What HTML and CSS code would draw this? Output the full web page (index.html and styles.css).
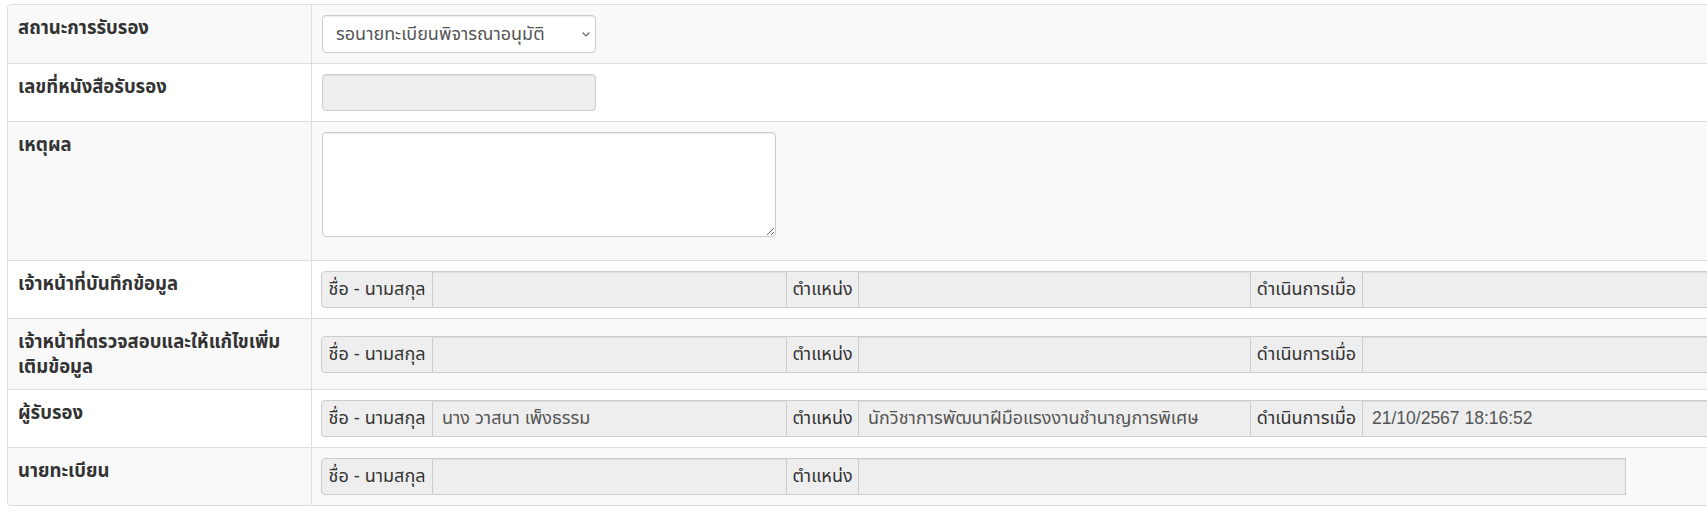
FILE: index.html
```html
<!DOCTYPE html>
<html lang="th">
<head>
<meta charset="utf-8">
<title>สถานะการรับรอง</title>
<link rel="stylesheet" href="styles.css">
</head>
<body>
<div class="panel">
	<div class="row">
		<div class="lbl">สถานะการรับรอง</div>
		<div class="val">
			<div class="sel-wrap">
				<select class="ctl sel"><option>รอนายทะเบียนพิจารณาอนุมัติ</option></select>
				<svg class="caret" width="8" height="5" viewBox="0 0 8 5"><path d="M0.5 0.5 L4 4 L7.5 0.5" fill="none" stroke="#666" stroke-width="1.1"/></svg>
			</div>
		</div>
	</div>
	<div class="row">
		<div class="lbl">เลขที่หนังสือรับรอง</div>
		<div class="val"><input class="ctl off" type="text" disabled></div>
	</div>
	<div class="row">
		<div class="lbl">เหตุผล</div>
		<div class="val"><textarea class="ctl memo"></textarea></div>
	</div>
	<div class="row">
		<div class="lbl">เจ้าหน้าที่บันทึกข้อมูล</div>
		<div class="val mid">
			<div class="grp">
				<span class="add a-name">ชื่อ - นามสกุล</span><span class="fld f-name"></span>
				<span class="add a-pos">ตำแหน่ง</span><span class="fld f-pos"></span>
				<span class="add a-date">ดำเนินการเมื่อ</span><span class="fld f-date"></span>
			</div>
		</div>
	</div>
	<div class="row">
		<div class="lbl">เจ้าหน้าที่ตรวจสอบและให้แก้ไขเพิ่มเติมข้อมูล</div>
		<div class="val mid">
			<div class="grp">
				<span class="add a-name">ชื่อ - นามสกุล</span><span class="fld f-name"></span>
				<span class="add a-pos">ตำแหน่ง</span><span class="fld f-pos"></span>
				<span class="add a-date">ดำเนินการเมื่อ</span><span class="fld f-date"></span>
			</div>
		</div>
	</div>
	<div class="row">
		<div class="lbl">ผู้รับรอง</div>
		<div class="val mid">
			<div class="grp">
				<span class="add a-name">ชื่อ - นามสกุล</span><span class="fld f-name">นาง วาสนา เพ็งธรรม</span>
				<span class="add a-pos">ตำแหน่ง</span><span class="fld f-pos">นักวิชาการพัฒนาฝีมือแรงงานชำนาญการพิเศษ</span>
				<span class="add a-date">ดำเนินการเมื่อ</span><span class="fld f-date"><span class="num">21/10/2567 18:16:52</span></span>
			</div>
		</div>
	</div>
	<div class="row">
		<div class="lbl">นายทะเบียน</div>
		<div class="val mid">
			<div class="grp">
				<span class="add a-name">ชื่อ - นามสกุล</span><span class="fld f-name"></span>
				<span class="add a-pos">ตำแหน่ง</span><span class="fld f-wide"></span>
			</div>
		</div>
	</div>
</div>
</body>
</html>
```

FILE: styles.css
```css
*{box-sizing:border-box;}
html,body{overflow:hidden;}
body{margin:0;padding:4px 0 0 7px;background:#fff;color:#333;font-family:"Liberation Sans","Noto Sans Thai",Tahoma,"Noto Sans",sans-serif;font-size:18px;line-height:25px;}
.panel{width:1760px;border:1px solid #ddd;border-radius:4px;overflow:hidden;}
.row{display:flex;border-top:1px solid #ddd;background:#fff;}
.row:first-child{border-top:0;}
.row:nth-child(odd){background:#f9f9f9;}
.lbl{flex:none;width:304px;padding:10px 10px;border-right:1px solid #ddd;font-weight:bold;font-size:18.5px;}
.val{flex:1;padding:10px 10px;}
.val.mid{display:flex;align-items:center;padding-left:9px;}
/* form controls */
.ctl{display:block;margin:0;border:1px solid #ccc;border-radius:4px;font:inherit;color:#555;box-shadow:inset 0 1px 1px rgba(0,0,0,.075);}
.sel-wrap{position:relative;width:274px;}
.sel{width:274px;height:38px;padding:0 13px;background:#fff;-webkit-appearance:none;appearance:none;}
.caret{position:absolute;right:6px;top:17px;}
.off{width:274px;height:37px;background:#eee;}
.memo{width:454px;height:105px;margin-bottom:13px;background:#fff;resize:vertical;}
/* input group */
.grp{display:flex;height:37px;color:#555;white-space:nowrap;}
.grp>span{display:flex;align-items:center;border:1px solid #ccc;border-left:0;background:#eee;}
.grp>span:first-child{border-left:1px solid #ccc;border-radius:4px 0 0 4px;}
.add{justify-content:center;color:#333;}
.fld{padding:0 9px;box-shadow:inset 0 1px 1px rgba(0,0,0,.075);}
.num{font-size:17.5px;}
.a-name{width:112px;}
.f-name{width:354px;}
.a-pos{width:72px;}
.f-pos{width:392px;}
.a-date{width:112px;}
.f-date{width:400px;}
.f-wide{width:767px;}
```
